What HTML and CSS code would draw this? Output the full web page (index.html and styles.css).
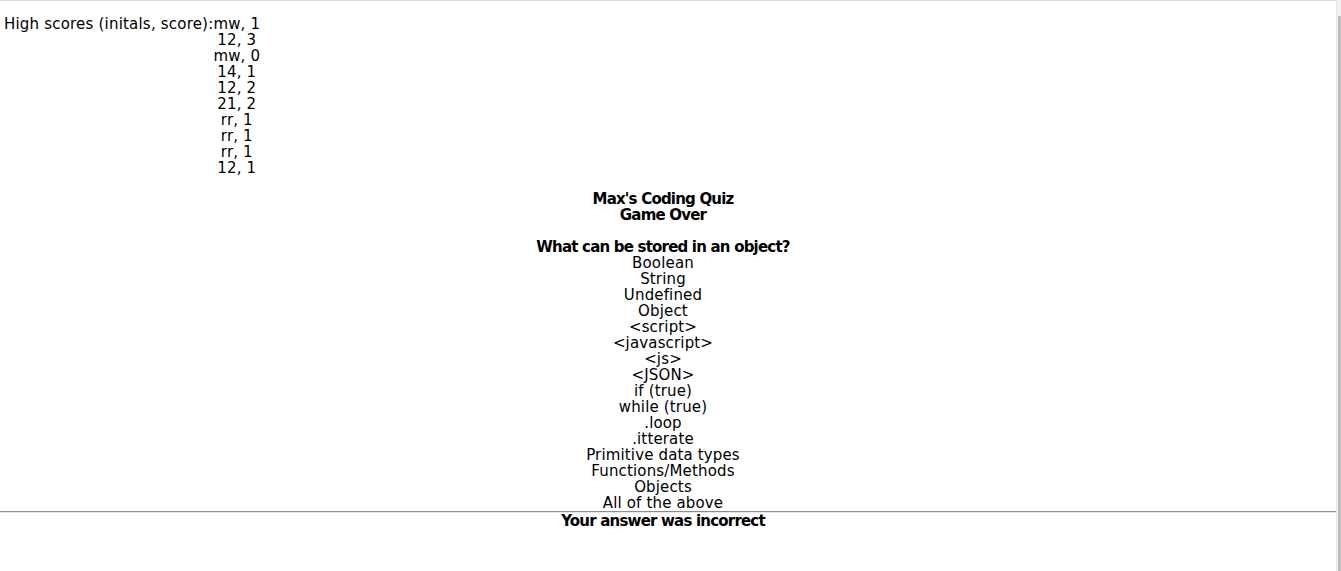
FILE: index.html
```html
<!DOCTYPE html>
<html>
<head>
<meta charset="utf-8">
<title>Max's Coding Quiz</title>
<link rel="stylesheet" href="styles.css">
</head>
<body>
<div class="topline"></div>
<div class="page">
  <div class="scores"><span class="label">High scores (initals, score):</span><div class="list">
    <div>mw, 1</div><div>12, 3</div><div>mw, 0</div><div>14, 1</div><div>12, 2</div><div>21, 2</div><div>rr, 1</div><div>rr, 1</div><div>rr, 1</div><div>12, 1</div>
  </div></div>
  <div class="quiz">
    <div class="title">Max's Coding Quiz</div>
    <div class="title">Game Over</div>
    <div class="question">What can be stored in an object?</div>
    <div class="options">
      <div>Boolean</div><div>String</div><div>Undefined</div><div>Object</div>
      <div>&lt;script&gt;</div><div>&lt;javascript&gt;</div><div>&lt;js&gt;</div><div>&lt;JSON&gt;</div>
      <div>if (true)</div><div>while (true)</div><div>.loop</div><div>.itterate</div>
      <div>Primitive data types</div><div>Functions/Methods</div><div>Objects</div><div>All of the above</div>
    </div>
    <hr class="rule">
    <div class="result">Your answer was incorrect</div>
  </div>
</div>
<div class="scrollbar"><div class="thumb"></div></div>
</body>
</html>
```
FILE: styles.css
```css
html, body {
  margin: 0;
  padding: 0;
  background: #fff;
}
body {
  font-family: "DejaVu Sans", sans-serif;
  font-size: 15px;
  line-height: 16px;
  letter-spacing: 0.15px;
  color: #000;
}
.topline {
  height: 1px;
  background: #dcdcdc;
}
.page {
  width: 1336px;
  padding-top: 15px;
}
.scores {
  padding-left: 4px;
}
.label {
  vertical-align: top;
  letter-spacing: 0.2px;
}
.list {
  display: inline-block;
  vertical-align: top;
  text-align: center;
}
.quiz {
  width: 1326px;
  text-align: center;
  margin-top: 15px;
}
.title, .question, .result {
  font-weight: bold;
  letter-spacing: -0.8px;
}
.question {
  margin-top: 16px;
}
.rule {
  margin: 0;
  width: 1336px;
  height: 0;
  border: 0;
  border-top: 1px solid #8c8c8c;
  border-bottom: 1px solid #e6e6e6;
}
.scrollbar {
  position: fixed;
  top: 0;
  right: 0;
  bottom: 0;
  width: 4px;
  background: #f0f0f0;
  border-left: 1px solid #e8e8e8;
}
.thumb {
  position: absolute;
  top: 16px;
  bottom: 0;
  right: 0;
  width: 3px;
  background: #bdbdbd;
}
```
